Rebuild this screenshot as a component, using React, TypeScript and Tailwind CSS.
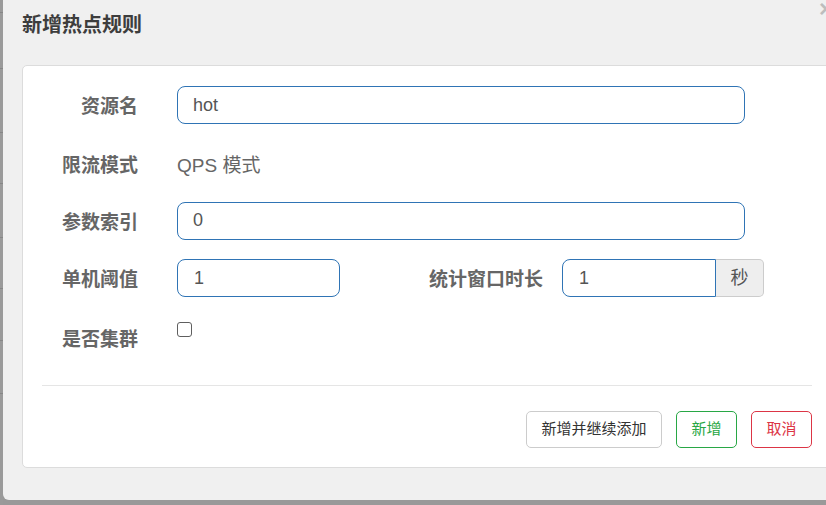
import React from "react";

const font = { fontFamily: '"Liberation Sans", "Noto Sans CJK SC", sans-serif' };

function Label({ children, className = "" }: { children: React.ReactNode; className?: string }) {
  return (
    <div className={"shrink-0 text-right font-bold text-[19px] leading-[26px] text-[#666] " + className}>
      {children}
    </div>
  );
}

export default function App() {
  const stripLines = [12, 68, 132, 183, 237, 288, 340, 393];
  return (
    <div className="w-[826px] h-[505px] bg-[#999] overflow-hidden flex items-start" style={font}>
      <div className="w-[3px] h-[505px] shrink-0 flex flex-col bg-[#9a9a9a]">
        {stripLines.map((y, i) => (
          <div key={i} className="h-0 border-t border-[#878787]" style={{ marginTop: i === 0 ? y : y - stripLines[i - 1] - 1 }} />
        ))}
      </div>
      <div className="relative flex-1 h-[500px] bg-[#f0f0f0] rounded-bl-[6px] pl-[19px] pt-[11px]">
        <div className="absolute left-[816px] top-[-6px] text-[24px] font-bold text-[#bdbdbd] leading-[30px]">×</div>
        <div className="text-[20px] font-bold leading-[28px] text-[#3d3d3d]">新增热点规则</div>
        <div className="mt-[26px] w-[810px] bg-white border border-[#dcdcdc] rounded-[5px] px-[19px] pt-[20px] pb-[19px]">
          <div className="flex flex-col gap-[19.75px]">
            <div className="flex items-center h-[38px]">
              <Label className="w-[96px] pt-[4px]">资源名</Label>
              <div className="ml-[39px] w-[568px] h-[38px] border border-[#2f74b5] rounded-[8px] pl-[15px] flex items-center text-[18px] text-[#555]">
                hot
              </div>
            </div>
            <div className="flex items-center h-[38px]">
              <Label className="w-[96px] pt-[6px]">限流模式</Label>
              <div className="ml-[39px] text-[19px] text-[#666] pt-[6px]">QPS 模式</div>
            </div>
            <div className="flex items-center h-[38px]">
              <Label className="w-[96px] pt-[4px]">参数索引</Label>
              <div className="ml-[39px] w-[568px] h-[38px] border border-[#2f74b5] rounded-[8px] pl-[15px] flex items-center text-[18px] text-[#555]">
                0
              </div>
            </div>
            <div className="flex items-center h-[38px]">
              <Label className="w-[96px] pt-[4px]">单机阈值</Label>
              <div className="ml-[39px] w-[163px] h-[38px] border border-[#2f74b5] rounded-[8px] pl-[16px] flex items-center text-[18px] text-[#555]">
                1
              </div>
              <Label className="w-[203px] pt-[4px]">统计窗口时长</Label>
              <div className="ml-[19px] flex h-[38px]">
                <div className="w-[154px] h-[38px] border border-[#2f74b5] rounded-l-[8px] pl-[16px] flex items-center text-[18px] text-[#555]">
                  1
                </div>
                <div className="w-[48px] h-[38px] bg-[#eeeeee] border border-l-0 border-[#cccccc] rounded-r-[5px] flex items-center justify-center text-[18px] text-[#555]">
                  秒
                </div>
              </div>
            </div>
            <div className="flex items-start h-[38px]">
              <Label className="w-[96px] mt-[10px]">是否集群</Label>
              <div className="ml-[39px] mt-[5px] w-[15px] h-[15px] border-[1.5px] border-[#5f5f5f] rounded-[3px] bg-white" />
            </div>
          </div>
          <div className="mt-[30px] border-t border-[#e5e5e5]" />
          <div className="mt-[25px] flex justify-end gap-[14px]">
            <button className="h-[37px] px-[14.5px] border border-[#cccccc] rounded-[5px] bg-white text-[15px] text-[#333]">
              新增并继续添加
            </button>
            <button className="h-[37px] px-[14.5px] border border-[#28a745] rounded-[5px] bg-white text-[15px] text-[#28a745]">
              新增
            </button>
            <button className="h-[37px] px-[14.5px] border border-[#dc3545] rounded-[5px] bg-white text-[15px] text-[#dc3545]">
              取消
            </button>
          </div>
        </div>
      </div>
    </div>
  );
}
